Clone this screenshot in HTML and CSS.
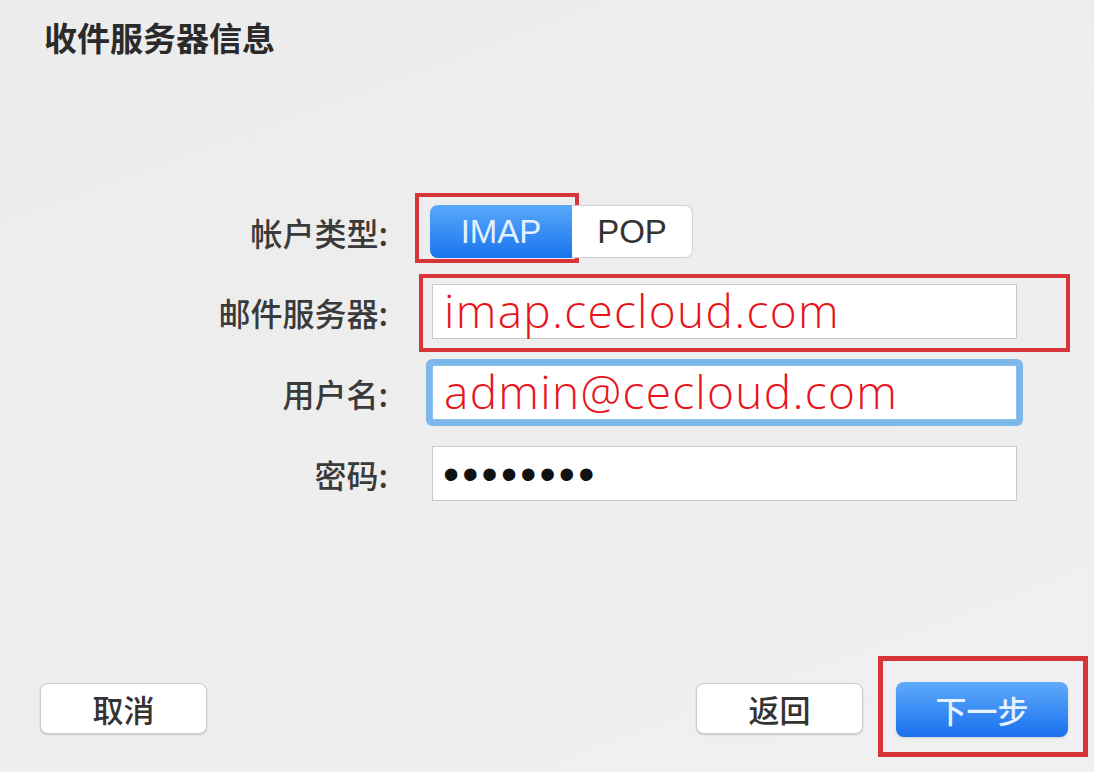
FILE: index.html
```html
<!DOCTYPE html>
<html lang="zh-CN">
<head>
<meta charset="utf-8">
<title>收件服务器信息</title>
<link rel="stylesheet" href="styles.css">
</head>
<body>
  <div class="page">
    <h1 class="title">收件服务器信息</h1>

    <div class="form">
      <div class="label">帐户类型:</div>
      <div class="field">
        <div class="seg">
          <span class="mark mark-seg"><span class="seg-btn seg-on">IMAP</span></span>
          <span class="seg-btn seg-off">POP</span>
        </div>
      </div>

      <div class="label">邮件服务器:</div>
      <div class="field">
        <div class="mark mark-input">
          <div class="input"><span class="val">imap.cecloud.com</span></div>
        </div>
      </div>

      <div class="label">用户名:</div>
      <div class="field">
        <div class="input focus"><span class="val">admin@cecloud.com</span></div>
      </div>

      <div class="label">密码:</div>
      <div class="field">
        <div class="input"><span class="pw">••••••••</span></div>
      </div>
    </div>

    <div class="footer">
      <button class="btn">取消</button>
      <div class="right">
        <button class="btn">返回</button>
        <span class="mark mark-next"><button class="btn btn-primary">下一步</button></span>
      </div>
    </div>
  </div>
</body>
</html>
```

FILE: styles.css
```css
* { box-sizing: border-box; }

html, body {
  margin: 0;
  padding: 0;
}

body {
  background: #ececec;
  font-family: "Noto Sans CJK SC", "Noto Sans", sans-serif;
  color: #333;
}

.page {
  width: 1094px;
  height: 772px;
  display: flex;
  flex-direction: column;
  background: linear-gradient(160deg, #ececec 0%, #eeeeee 60%, #f0f0f0 100%);
}

.title {
  margin: 0;
  padding: 21px 0 0 44px;
  font-size: 33px;
  line-height: 33px;
  font-weight: 700;
  color: #2a2a2a;
  letter-spacing: 0;
}

.form {
  margin-top: 151px;
  display: grid;
  grid-template-columns: 388px 585px;
  column-gap: 44px;
  row-gap: 26px;
  align-items: center;
}

.label {
  text-align: right;
  font-size: 32px;
  line-height: 40px;
  font-weight: 500;
  color: #3a3a3a;
}

.field {
  display: flex;
  align-items: center;
}

/* segmented control */
.seg {
  display: flex;
  margin-left: -2px;
  height: 53px;
}

.seg-btn {
  display: flex;
  align-items: center;
  justify-content: center;
  height: 53px;
  font-family: "Liberation Sans", Arial, sans-serif;
  font-size: 33px;
}

.seg-on {
  width: 142px;
  border-radius: 8px 0 0 8px;
  background: linear-gradient(#5aa9fb, #1873ef);
  color: #e3f1ff;
}

.seg-off {
  width: 121px;
  border: 1px solid #d2d2d2;
  border-left: none;
  border-radius: 0 8px 8px 0;
  background: #fff;
  color: #333;
}

/* annotation frames */
.mark {
  display: block;
  border: 4px solid #d8353a;
}

.mark-seg {
  padding: 8px 3px 1px 11px;
  margin: -12px -7px -5px -15px;
}

.mark-input {
  padding: 6px 49px 9px 9px;
  margin: -10px -53px -13px -13px;
}

.mark-next {
  border-width: 5px;
  padding: 21px 15px 15px 13px;
  margin: -24px -20px -20px -18px;
}

/* inputs */
.input {
  width: 585px;
  height: 55px;
  background: #fff;
  border: 1px solid #c9c9c9;
  display: flex;
  align-items: center;
  padding-left: 11px;
}

.input.focus {
  border-color: #8cc0ee;
  border-radius: 2px;
  box-shadow: 0 0 0 6px #7db8ea;
}

.val {
  font-family: "Open Sans", "Noto Sans", sans-serif;
  font-size: 46px;
  font-weight: 300;
  line-height: 1;
  color: #e8141c;
  letter-spacing: 1.3px;
  margin-top: -4px;
}

.pw {
  font-family: "Liberation Sans", Arial, sans-serif;
  font-size: 46px;
  line-height: 1;
  letter-spacing: 3.2px;
  color: #111;
  margin-left: -1px;
}

/* footer */
.footer {
  margin-top: auto;
  display: flex;
  justify-content: space-between;
  align-items: center;
  padding: 0 26px 35px 40px;
}

.right {
  display: flex;
  align-items: center;
  gap: 33px;
}

.btn {
  font-family: "Noto Sans CJK SC", sans-serif;
  font-size: 31px;
  font-weight: 500;
  height: 51px;
  width: 167px;
  border: 1px solid #cfcfcf;
  border-radius: 8px;
  background: #fff;
  color: #333;
  box-shadow: 0 1px 2px rgba(0, 0, 0, 0.18);
  padding: 0;
  line-height: 1;
}

.btn-primary {
  width: 172px;
  height: 55px;
  border: none;
  background: linear-gradient(#5eaafb, #1a70ee);
  color: #e6f2ff;
  box-shadow: 0 1px 2px rgba(0, 0, 0, 0.15);
  display: block;
}
```
